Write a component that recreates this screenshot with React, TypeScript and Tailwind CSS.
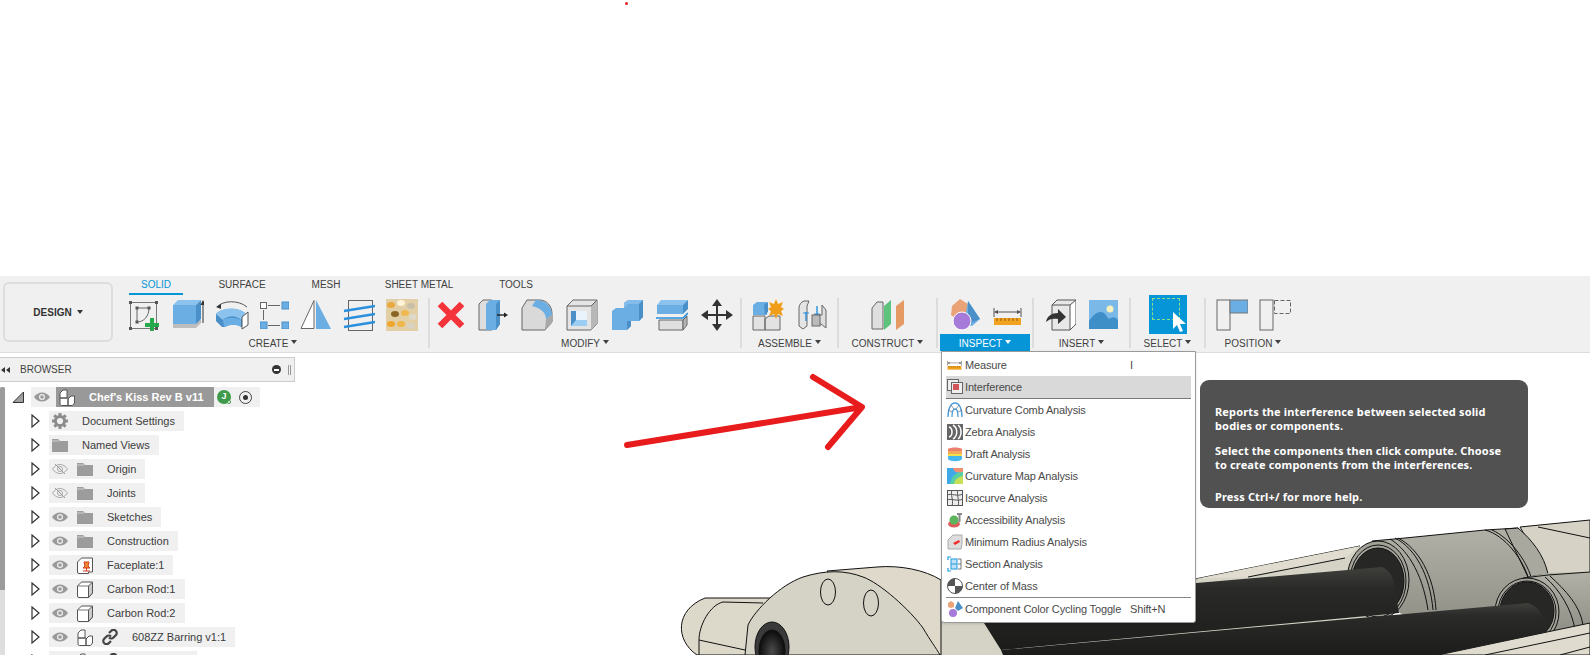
import type { ReactNode } from 'react'

const BLUE = '#6aaee4'
const DARK = '#4a8fc8'

function Ic({ w, h, children }: { w: number; h: number; children: ReactNode }) {
  return <svg width={w} height={h} viewBox={`0 0 ${w} ${h}`} className="shrink-0">{children}</svg>
}

// ---- toolbar icons
const Sketch = () => (
  <Ic w={32} h={32}>
    <rect x="1.500" y="3.500" width="26" height="26" fill="none" stroke="#777" strokeWidth="1" />
    {[[0, 2], [26, 2], [0, 28], [26, 28]].map(([x, y]) => <rect key={`${x}${y}`} x={x} y={y} width="3" height="3" fill="#555" />)}
    <path d="M8 9h12M8 9v14M20 9c0 8-5 14-12 14" fill="none" stroke="#666" />
    <rect x="6.500" y="7.500" width="3" height="3" fill="#555" /><rect x="18.500" y="7.500" width="3" height="3" fill="#555" /><rect x="6.500" y="21.500" width="3" height="3" fill="#555" />
    <path d="M21 19h4v5h5v4h-5v4h-4v-4h-5v-4h5z" fill="#27a84a" />
  </Ic>
)
const Extrude = () => (
  <Ic w={32} h={32}>
    <path d="M1 29h23l5-5v-3H1z" fill="#bdbdbd" />
    <path d="M1 6h23v19H1z" fill={BLUE} /><path d="M1 6l5-5h23l-5 5z" fill="#8cc3ee" /><path d="M24 6l5-5v19l-5 5z" fill={DARK} />
    <path d="M31 24V3" stroke="#333" /><path d="M31 1l-2.500 5h5z" fill="#333" />
  </Ic>
)
const Revolve = () => (
  <Ic w={34} h={30}>
    <path d="M2 7C8 0 24 0 32 7" fill="none" stroke="#555" /><path d="M1 7l5-3v5z" fill="#333" />
    <path d="M1 14c6-7 24-7 30 0l-4 13c-5-3-12-3-17 0H7L1 21z" fill={DARK} />
    <path d="M1 14c6-7 24-7 30 0l-5 6c-5-5-13-5-18 0z" fill="#8cc3ee" />
    <path d="M8 20c5-3 12-3 18 0v7c-5-3-11-3-17 0z" fill={BLUE} />
    <path d="M27 17l6-5v13l-6 4z" fill="#fff" stroke="#555" />
  </Ic>
)
const Pattern = () => (
  <Ic w={29} h={29}>
    <rect x="0.500" y="2.500" width="6" height="6" fill="#fff" stroke="#666" /><rect x="22" y="2" width="7" height="7" fill={BLUE} stroke={DARK} />
    <rect x="0" y="22" width="7" height="7" fill={BLUE} stroke={DARK} /><rect x="22" y="22" width="7" height="7" fill={BLUE} stroke={DARK} />
    <path d="M8 5.500h12M8 25.500h12M3.500 10v10" stroke="#666" />
  </Ic>
)
const Mirror = () => (
  <Ic w={32} h={31}>
    <path d="M14 1.500v28H1z" fill="#fff" stroke="#666" /><path d="M16 1l15 29H16z" fill={BLUE} />
  </Ic>
)
const Lines = () => (
  <Ic w={32} h={32}>
    <rect x="5.500" y="1.500" width="24" height="30" fill="#f0f0f0" stroke="#666" />
    <path d="M1 12L32 7M1 20l31-5M1 28l31-5" stroke="#2a8fdd" strokeWidth="2.400" />
  </Ic>
)
const Texture = () => (
  <Ic w={32} h={32}>
    <rect width="32" height="32" fill="#e2cfa6" />
    {[[5, 6, '#e9a93e'], [15, 4, '#fff3d8'], [25, 7, '#c8bfa9'], [9, 15, '#8a6424'], [19, 14, '#f0b84f'], [27, 18, '#ddd8c8'], [5, 25, '#f0a52e'], [15, 25, '#efb64a'], [25, 27, '#d9d3c2']].map(([x, y, c]) => (
      <ellipse key={`${x}${y}`} cx={x as number} cy={y as number} rx="4" ry="3" fill={c as string} />
    ))}
  </Ic>
)
const RedX = () => (
  <Ic w={28} h={28}>
    <path d="M3 3l22 22M25 3L3 25" stroke="#f5333a" strokeWidth="6.500" />
  </Ic>
)
const PressPull = () => (
  <Ic w={30} h={32}>
    <path d="M1 5l4-4h9v30H1z" fill="#ddd" stroke="#666" /><path d="M8 5l4-4h10v24l-4 6H8z" fill={BLUE} /><path d="M18 5l4-4v24l-4 6z" fill={DARK} />
    <path d="M19 16h9" stroke="#222" strokeWidth="1.400" /><path d="M30 16l-4-2.500v5z" fill="#222" />
  </Ic>
)
const Fillet = () => (
  <Ic w={32} h={32}>
    <path d="M1 31V9l5-8h12c8 0 13 6 13 14v8l-7 8z" fill="#d9d9d9" stroke="#666" />
    <path d="M15 1c9 0 16 6 16 15l-6 4c0-6-5-11-14-13z" fill={BLUE} />
    <path d="M25 20l6-4v8l-7 7z" fill="#a8a8a8" />
  </Ic>
)
const Shell = () => (
  <Ic w={32} h={32}>
    <path d="M1 7l6-6h24v24l-6 6H1z" fill="#e4e4e4" stroke="#666" /><path d="M25 7l6-6v24l-6 6z" fill="#b8b8b8" /><path d="M1 7h24l6-6" fill="none" stroke="#666" />
    <rect x="5" y="12" width="16" height="15" fill={DARK} /><path d="M10 12h11v9H10z" fill="#e9f3fb" /><path d="M5 27l5-6h11v6z" fill="#9ccdf2" />
  </Ic>
)
const Combine = () => (
  <Ic w={32} h={32}>
    <path d="M1 12l4-3h8V4l4-3h15v17l-4 4h-8v5l-4 4H1z" fill={BLUE} /><path d="M13 9V4l4-3h15l-4 4H17z" fill="#84bcec" /><path d="M28 5l4-4v17l-4 4zM20 22v5l-4 4v-9z" fill={DARK} />
  </Ic>
)
const Split = () => (
  <Ic w={32} h={32}>
    <path d="M1 6l4-5h27l-4 5z" fill="#8cc3ee" /><path d="M1 6h26v9H1z" fill={BLUE} /><path d="M27 6l5-5v9l-5 5z" fill={DARK} />
    <path d="M0 19h27l5-5" fill="none" stroke="#2a8fdd" strokeWidth="1.600" />
    <path d="M3 21h24v10H3z" fill="#e0e0e0" stroke="#666" /><path d="M27 21l4-4v9l-4 5z" fill="#b5b5b5" stroke="#666" />
  </Ic>
)
const Move = () => (
  <Ic w={32} h={32}>
    <path d="M16 3v26M3 16h26" stroke="#333" strokeWidth="2" />
    <path d="M16 0l-5 7h10zM16 32l-5-7h10zM0 16l7-5v10zM32 16l-7-5v10z" fill="#333" />
  </Ic>
)
const NewComp = () => (
  <Ic w={32} h={32}>
    <path d="M1 17h12v14H1zM13 20l4-3h11v14H13z" fill="#e2e2e2" stroke="#666" />
    <path d="M1 6l4-3h10v13H1z" fill={BLUE} /><path d="M12 6l4-3v10l-3 3z" fill={DARK} />
    <path d="M24 0l2 5 5-2-2 5 3 2-3 2 2 5-5-2-2 5-2-5-5 2 2-5-3-2 3-2-2-5 5 2z" fill="#f09d1a" />
  </Ic>
)
const Joint = () => (
  <Ic w={30} h={30}>
    <path d="M2 8c0-3 2-6 5-7h5l-2 5v20l-4 3-4-3z" fill="#e4e4e4" stroke="#666" />
    <path d="M17 15h8V5l4 5v18l-5-4h-7z" fill="#dedede" stroke="#666" />
    <path d="M9 12v9M20 6v11" stroke="#2a8fdd" strokeWidth="1.400" /><path d="M6 13h6M17 14h6" stroke="#2a8fdd" />
    <rect x="15" y="15" width="8" height="11" fill="#bbb" stroke="#666" />
  </Ic>
)
const Plane = () => (
  <Ic w={34} h={32}>
    <path d="M1 9l5-6h6v27H1z" fill="#dfdfdf" stroke="#666" /><path d="M13 7l7-6v24l-7 6z" fill="#5cc27c" /><path d="M25 7l8-6v24l-8 6z" fill="#e49a62" />
  </Ic>
)
const Shapes = () => (
  <Ic w={32} h={33}>
    <path d="M3 8l8-7 8 5 0 10-9 7-8-6z" fill="#e9a376" /><path d="M19 3l12 18-8 7-8-2z" fill={BLUE} /><path d="M19 3v23l12-5z" fill={DARK} />
    <circle cx="13" cy="23" r="9" fill="#a57ad8" stroke="#fff" />
  </Ic>
)
const Ruler = ({ w = 29, h = 18 }: { w?: number; h?: number }) => (
  <svg width={w} height={h} viewBox="0 0 29 18" className="shrink-0">
    <path d="M1 1v9M28 1v9M2 5h25" stroke="#555" /><path d="M1 5l4-2v4zM28 5l-4-2v4z" fill="#555" />
    <rect x="1" y="11" width="27" height="7" fill="#f2a21f" /><path d="M4 11v3M8 11v3M12 11v3M16 11v3M20 11v3M24 11v3" stroke="#8f5f0f" />
  </svg>
)
const InsertIc = () => (
  <Ic w={30} h={32}>
    <path d="M6 6l5-5h19v24l-6 6H6z" fill="#e8e8e8" stroke="#555" /><path d="M24 6l6-5v24l-6 6z" fill="#fff" stroke="#555" /><path d="M6 6h18" stroke="#555" />
    <path d="M0 23c1-6 6-9 12-9v-4l8 8-8 7v-5c-5-1-9 0-12 3z" fill="#333" />
  </Ic>
)
const Canvas = () => (
  <Ic w={29} h={29}>
    <rect width="29" height="29" fill="#7ab8e8" /><circle cx="21" cy="9" r="3.500" fill="#f6f1bf" />
    <path d="M0 29V21c5-7 8-9 12-9s5 4 8 7c3-2 6-3 9 1v9z" fill="#3e8fc8" />
  </Ic>
)
const SelectIc = () => (
  <div className="relative h-[39px] w-[38px] bg-[#0696d7]">
    <div className="m-[3px] h-[22px] w-[28px] border border-dashed border-[#8be08b]" />
    <svg width="14" height="20" viewBox="0 0 14 20" className="absolute left-[24px] top-[17px]">
      <path d="M0 0v17l4-4 3 7 3-1-3-7h6z" fill="#fff" />
    </svg>
  </div>
)
const PosA = () => (
  <Ic w={32} h={32}>
    <rect x="1" y="1" width="13" height="30" fill="#f0f0f0" stroke="#666" /><rect x="14" y="1" width="18" height="13" fill={BLUE} stroke="#777" />
  </Ic>
)
const PosB = () => (
  <Ic w={32} h={32}>
    <rect x="1" y="1" width="13" height="30" fill="#f0f0f0" stroke="#666" /><rect x="15.500" y="1.500" width="16" height="13" fill="none" stroke="#666" strokeDasharray="4 2" />
  </Ic>
)

function Group({ w, label, active, children }: { w: number; label: string; active?: boolean; children: ReactNode }) {
  return (
    <div className="flex shrink-0 flex-col items-stretch" style={{ width: w }}>
      <div className="flex h-[39px] items-center justify-center">{children}</div>
      <div className={`mx-[2px] flex h-[17px] items-center justify-center gap-[3px] pt-[1px] text-[10px] ${active ? 'bg-[#0696d7] text-white' : 'text-[#404040]'}`}>
        {label}
        <span className="mb-[2px] h-0 w-0 border-x-[3px] border-t-[4px] border-x-transparent border-t-current" />
      </div>
    </div>
  )
}
const Divider = () => <div className="mt-[3px] h-[50px] w-[2px] shrink-0 bg-[#dcdcdc]" />

function Toolbar() {
  const tabs: [string, number, boolean?][] = [['SOLID', 54, true], ['SURFACE', 118], ['MESH', 50], ['SHEET METAL', 136], ['TOOLS', 58]]
  return (
    <div className="flex h-[77px] border-b border-[#dddddd] bg-[#f0f0f0]">
      <div className="ml-[3px] mt-[6px] flex h-[60px] w-[110px] shrink-0 items-center justify-center gap-[5px] rounded-[6px] border-2 border-[#dddddd] text-[10px] font-bold text-[#333]">
        DESIGN
        <span className="h-0 w-0 border-x-[3px] border-t-[4px] border-x-transparent border-t-[#333]" />
      </div>
      <div className="ml-[5px] flex flex-col">
        <div className="ml-[11px] flex h-[19px]">
          {tabs.map(([t, w, on]) => (
            <div key={t} style={{ width: w }} className={`pt-[1px] text-center text-[10px] ${on ? 'border-b-2 border-[#0696d7] text-[#0696d7]' : 'text-[#404040]'}`}>{t}</div>
          ))}
        </div>
        <div className="flex">
          <Group w={310} label="CREATE">
            <div className="flex items-center gap-[11px]"><Sketch /><Extrude /><Revolve /><Pattern /><Mirror /><Lines /><Texture /></div>
          </Group>
          <Divider />
          <Group w={310} label="MODIFY">
            <div className="flex items-center gap-[13px]"><RedX /><PressPull /><Fillet /><Shell /><Combine /><Split /><Move /></div>
          </Group>
          <Divider />
          <Group w={95} label="ASSEMBLE">
            <div className="flex items-center gap-[13px]"><NewComp /><Joint /></div>
          </Group>
          <Divider />
          <Group w={97} label="CONSTRUCT"><Plane /></Group>
          <Divider />
          <Group w={94} label="INSPECT" active>
            <div className="flex items-center gap-[12px]"><Shapes /><div className="mt-[3px]"><Ruler /></div></div>
          </Group>
          <Divider />
          <Group w={95} label="INSERT">
            <div className="flex items-center gap-[13px]"><InsertIc /><Canvas /></div>
          </Group>
          <Divider />
          <Group w={73} label="SELECT"><SelectIc /></Group>
          <Divider />
          <Group w={94} label="POSITION">
            <div className="flex items-center gap-[11px]"><PosA /><PosB /></div>
          </Group>
        </div>
      </div>
    </div>
  )
}

// ---- browser tree
const Eye = () => (
  <svg width="16" height="10" viewBox="0 0 16 10" className="shrink-0">
    <path d="M0 5c4-6 12-6 16 0-4 6-12 6-16 0z" fill="#9a9a9a" /><circle cx="8" cy="5" r="3" fill="#f0f0f0" /><circle cx="8" cy="5" r="1.800" fill="#9a9a9a" />
  </svg>
)
const EyeOff = () => (
  <svg width="16" height="12" viewBox="0 0 16 12" className="shrink-0">
    <path d="M0.500 6c4-6 11-6 15 0-4 6-11 6-15 0z" fill="none" stroke="#aaa" /><circle cx="8" cy="6" r="2.500" fill="none" stroke="#aaa" /><path d="M3 1l10 10" stroke="#999" />
  </svg>
)
const Folder = () => (
  <svg width="16" height="13" viewBox="0 0 16 13" className="shrink-0">
    <path d="M0 0h6l2 2h8v11H0z" fill="#9c9c9c" /><path d="M0 2h7" stroke="#d0d0d0" />
  </svg>
)
const Gear = () => (
  <svg width="16" height="16" viewBox="0 0 16 16" className="shrink-0">
    <circle cx="8" cy="8" r="4.600" fill="none" stroke="#8c8c8c" strokeWidth="3" />
    <path d="M8 0v16M0 8h16M2.300 2.300l11.400 11.400M13.700 2.300L2.300 13.700" stroke="#8c8c8c" strokeWidth="3" strokeDasharray="3 10" />
  </svg>
)
const Box = () => (
  <svg width="16" height="17" viewBox="0 0 16 17" className="shrink-0">
    <path d="M0.500 5l4-4h11v11l-4 4.500H2a1.500 1.500 0 0 1-1.500-1.500z" fill="#fff" stroke="#555" /><path d="M11.500 5l4-4v11l-4 4.500z" fill="#ccc" stroke="#555" /><path d="M0.500 5h11" stroke="#777" />
  </svg>
)
const Pinned = () => (
  <svg width="16" height="17" viewBox="0 0 16 17" className="shrink-0">
    <path d="M0.500 5l4-4h11v14h-4v1.500H2a1.500 1.500 0 0 1-1.500-1.500z" fill="#fff" stroke="#555" />
    <path d="M7 5h5l-1 4 2 2H6l2-2zM9.500 11v3" fill="#f08a2c" stroke="#d23a1f" />
    <path d="M6 14h7" stroke="#d23a1f" />
  </svg>
)
const Assembly = () => (
  <svg width="16" height="17" viewBox="0 0 16 17" className="shrink-0">
    <path d="M1 4l3-3h4v8H1zM1 9h8v7.500H2.500A1.500 1.500 0 0 1 1 15zM9 10l3-3h3.500v7l-2 2.500H9z" fill="#fff" stroke="#555" />
  </svg>
)
const LinkIc = () => (
  <svg width="16" height="16" viewBox="0 0 16 16" className="shrink-0" fill="none" stroke="#444" strokeWidth="2.200">
    <path d="M7 4l2-2a3 3 0 0 1 5 4l-2.500 2.500a3 3 0 0 1-4.500 0" /><path d="M9 12l-2 2a3 3 0 0 1-5-4l2.500-2.500a3 3 0 0 1 4.500 0" />
  </svg>
)
const Caret = () => (
  <svg width="9" height="14" viewBox="0 0 9 14" className="shrink-0"><path d="M1 1l7 6-7 6z" fill="#fff" stroke="#333" strokeWidth="1.200" /></svg>
)

type Row = { label: string; eye?: 'on' | 'off'; icon: ReactNode; link?: boolean; w?: number }
const rows: Row[] = [
  { label: 'Document Settings', icon: <Gear /> },
  { label: 'Named Views', icon: <Folder /> },
  { label: 'Origin', eye: 'off', icon: <Folder /> },
  { label: 'Joints', eye: 'off', icon: <Folder /> },
  { label: 'Sketches', eye: 'on', icon: <Folder /> },
  { label: 'Construction', eye: 'on', icon: <Folder /> },
  { label: 'Faceplate:1', eye: 'on', icon: <Pinned /> },
  { label: 'Carbon Rod:1', eye: 'on', icon: <Box /> },
  { label: 'Carbon Rod:2', eye: 'on', icon: <Box /> },
  { label: '608ZZ Barring v1:1', eye: 'on', icon: <Assembly />, link: true },
  { label: '', eye: 'on', icon: <Assembly />, link: true, w: 148 }, // cut by the window, only the icons show
]

function TreeRow({ label, eye, icon, link, w }: Row) {
  return (
    <div className="flex h-[20px] items-center pl-[26px]">
      <div className="mr-[9px] flex w-[9px]"><Caret /></div>
      <div style={{ width: w }} className="flex h-[20px] items-center bg-[#f0f0f0] pl-[3px] pr-[9px] text-[11px] text-[#3c3c3c]">
        {eye && <span className="flex w-[25px]">{eye === 'on' ? <Eye /> : <EyeOff />}</span>}
        <span className="flex w-[30px]">{icon}</span>
        {link && <span className="-ml-[5px] flex w-[30px]"><LinkIc /></span>}
        {label}
      </div>
    </div>
  )
}

function Browser() {
  return (
    <div className="relative z-10 w-[295px] shrink-0 pt-[4px]">
      <div className="flex h-[25px] items-center border border-l-0 border-[#cccccc] bg-[#f0f0f0] pl-[1px] text-[10px] text-[#444]">
        <span className="flex w-[19px]">
          <svg width="9" height="6" viewBox="0 0 9 6"><path d="M4 0v6L0 3zM9 0v6L5 3z" fill="#333" /></svg>
        </span>
        BROWSER
        <span className="ml-auto mr-[3px] flex items-center gap-[7px]">
          <span className="flex h-[9px] w-[9px] items-center justify-center rounded-full bg-[#333]"><span className="h-[2px] w-[5px] bg-white" /></span>
          <span className="h-[10px] w-[3px] border-x border-[#999]" />
        </span>
      </div>
      <div className="mt-[5px] flex">
        <div className="h-[300px] w-[5px] shrink-0 bg-[#dedede]"><div className="h-[203px] rounded-t-[2px] bg-[#9b9b9b]" /></div>
        <div className="flex flex-col gap-[4px]">
          <div className="flex h-[20px] items-center pl-[7px]">
            <svg width="12" height="12" viewBox="0 0 12 12" className="mr-[7px] shrink-0"><path d="M1 11.500L11.500 1v10.500z" fill="#a0a0a0" stroke="#333" /></svg>
            <div className="flex h-[20px] w-[229px] items-center bg-[#f0f0f0] pl-[3px]">
              <span className="flex w-[22px]"><Eye /></span>
              <div className="flex h-[20px] w-[158px] items-center bg-[#999999] pl-[3px] text-[11px] font-bold text-white">
                <Assembly /><span className="ml-[14px]">Chef's Kiss Rev B v11</span>
              </div>
              <span className="relative ml-[3px] flex h-[14px] w-[14px] items-center justify-center rounded-full bg-[#3f9b4b] text-[9px] font-bold text-white">
                J<span className="absolute bottom-0 right-0 h-[4px] w-[4px] rounded-full border border-[#3f9b4b] bg-white" />
              </span>
              <span className="ml-[8px] flex h-[13px] w-[13px] items-center justify-center rounded-full border border-[#444]"><span className="h-[5px] w-[5px] rounded-full bg-[#333]" /></span>
            </div>
          </div>
          {rows.map(r => <TreeRow key={r.label || 'cut'} {...r} />)}
        </div>
      </div>
    </div>
  )
}

// ---- dropdown
const Sz = ({ children }: { children: ReactNode }) => <svg width="16" height="16" viewBox="0 0 16 16">{children}</svg>
const menuIcons: Record<string, ReactNode> = {
  Measure: <Ruler w={15} h={10} />,
  Interference: <Sz><rect x="0.500" y="0.500" width="11" height="11" fill="#eee" stroke="#666" /><rect x="4.500" y="3.500" width="11" height="11" fill="#eee" stroke="#666" /><rect x="6" y="5" width="6" height="6" fill="#d2555a" /></Sz>,
  'Curvature Comb Analysis': <Sz><path d="M1 15C1 6 4 1 8 1s7 5 7 14M5 15c0-5 1-8 3-8s3 3 3 8" fill="none" stroke="#4a9ad8" strokeWidth="1.300" /><path d="M1 8l4 2M4 3l3 4M12 3L9 7M15 8l-4 2" stroke="#666" strokeWidth=".7" /></Sz>,
  'Zebra Analysis': <Sz><rect width="16" height="16" fill="#666" /><path d="M2 3c4 1 4 9 0 10M6 1c5 3 5 11 0 14M11 1c4 3 4 11 0 14" fill="none" stroke="#fff" strokeWidth="1.500" /></Sz>,
  'Draft Analysis': <Sz><path d="M1 3c2-2 12-2 14 0v2H1z" fill="#ef7f6d" /><rect x="1" y="5" width="14" height="3" fill="#f5a95a" /><rect x="1" y="8" width="14" height="2" fill="#f2e14a" /><path d="M1 10h14v3c-2 3-12 3-14 0z" fill="#45b7ee" /></Sz>,
  'Curvature Map Analysis': <Sz><rect width="16" height="16" fill="#3fa9e8" /><path d="M3 16C4 9 9 4 16 3v13z" fill="#58d0a6" /><path d="M7 16c1-5 4-7 9-8v8z" fill="#c8df58" /><path d="M6 0h10v4C11 4 8 6 6 0z" fill="#ef8f74" /></Sz>,
  'Isocurve Analysis': <Sz><rect x="0.500" y="0.500" width="15" height="15" fill="#eee" stroke="#555" /><path d="M0 5c5-2 10 2 16-1M0 10c5-2 10 2 16-1M5 0c-2 5 2 10 0 16M11 0c-2 5 2 10 0 16" fill="none" stroke="#555" /></Sz>,
  'Accessibility Analysis': <Sz><ellipse cx="7" cy="12" rx="6" ry="3.500" fill="#df5c5c" /><circle cx="7" cy="8" r="4.500" fill="#5cb45c" /><path d="M10 1h5v2h-1.500v7h-2V3H10z" fill="#888" /></Sz>,
  'Minimum Radius Analysis': <Sz><path d="M1 6l5-5h9v9l-1 5H1z" fill="#ddd" stroke="#aaa" /><path d="M6 9l6-3 1 2-5 3z" fill="#ef2b2b" /></Sz>,
  'Section Analysis': <Sz><path d="M4 1H1v3M1 12v3h3" fill="none" stroke="#1f9be0" strokeWidth="1.200" /><rect x="4" y="3" width="6" height="10" fill="#bfe0f6" stroke="#1f9be0" /><path d="M4 8h6" stroke="#1f9be0" /><path d="M11 3h3v10h-3M11 8h3" fill="none" stroke="#777" /></Sz>,
  'Center of Mass': <Sz><circle cx="8" cy="8" r="7.500" fill="#fff" stroke="#555" /><path d="M8 8V.5A7.500 7.500 0 0 0 .5 8zM8 8v7.500A7.500 7.500 0 0 0 15.500 8z" fill="#555" /></Sz>,
  'Component Color Cycling Toggle': <Sz><path d="M1 2l3-2 3 2v4L4 7 1 6z" fill="#e9a376" /><path d="M11 0l5 7-5 3-3-3z" fill={DARK} /><circle cx="6" cy="12" r="4" fill="#a57ad8" /></Sz>,
}
const items: [string, string?][] = [
  ['Measure', 'I'], ['Interference'], ['Curvature Comb Analysis'], ['Zebra Analysis'], ['Draft Analysis'], ['Curvature Map Analysis'],
  ['Isocurve Analysis'], ['Accessibility Analysis'], ['Minimum Radius Analysis'], ['Section Analysis'], ['Center of Mass'],
]

function MenuRow({ label, shortcut }: { label: string; shortcut?: string }) {
  const on = label === 'Interference'
  return (
    <div className={`flex items-center pl-[1px] text-[11px] tracking-[-0.15px] text-[#4a4a4a] ${on ? 'h-[23px] border-b border-[#777] bg-[#d9d9d9]' : 'h-[22px]'}`}>
      <span className="flex w-[18px] items-center">{menuIcons[label]}</span>
      <span className="w-[165px] shrink-0 whitespace-nowrap">{label}</span>
      {shortcut && <span>{shortcut}</span>}
    </div>
  )
}

function InspectMenu() {
  return (
    <div className="absolute left-[941px] top-[351px] z-20 h-[272px] w-[255px] rounded-b-[3px] border border-[#999] bg-white px-[4px] pt-[2px] shadow-sm">
      {items.map(([l, s]) => <MenuRow key={l} label={l} shortcut={s} />)}
      <div className="h-px bg-[#888]" />
      <MenuRow label="Component Color Cycling Toggle" shortcut="Shift+N" />
    </div>
  )
}

function Tip() {
  return (
    <div className="absolute left-[1200px] top-[380px] z-20 flex h-[128px] w-[328px] flex-col rounded-[9px] bg-[#515151] pl-[15px] pt-[25px] font-['Noto_Sans',sans-serif] text-[11px] font-bold leading-[14px] tracking-[0.15px] text-white">
      <p>Reports the interference between selected solid<br />bodies or components.</p>
      <p className="mt-[11px]">Select the components then click compute. Choose<br />to create components from the interferences.</p>
      <p className="mt-[18px]">Press Ctrl+/ for more help.</p>
    </div>
  )
}

// ---- the model in the viewport and the hand drawn arrow, page coordinates
function Scene() {
  return (
    <svg width="1590" height="655" viewBox="0 0 1590 655" className="absolute left-0 top-0 z-0">
      <defs>
        <linearGradient id="rod" x1="0" y1="0" x2="0" y2="1"><stop offset="0" stopColor="#3f3f3c" /><stop offset="0.25" stopColor="#2a2a28" /><stop offset="1" stopColor="#1c1c1b" /></linearGradient>
        <linearGradient id="sleeve" x1="0" y1="0" x2="0" y2="1"><stop offset="0" stopColor="#b2b1a7" /><stop offset="1" stopColor="#908f86" /></linearGradient>
        <radialGradient id="bore"><stop offset="0" stopColor="#4a4a4a" /><stop offset="1" stopColor="#0c0c0c" /></radialGradient>
      </defs>
      <g stroke="#111" strokeWidth="1">
        {/* base the sleeves sit on */}
        <path d="M930 600L1195 579 1360 546 1380 640 1010 655H930z" fill="#d5d3c6" stroke="none" />
        <path d="M1195 579L1360 546" fill="none" />
        <path d="M1195 579L1360 546 1345 558 1248 577z" fill="#e0dccf" stroke="none" />
        <path d="M1248 577L1345 558" fill="none" />
        <path d="M1520 527L1590 520V580L1548 575z" fill="#d6d3c6" />
        <path d="M1538 527L1590 538" fill="none" />
        {/* sleeves */}
        <path d="M1372 541L1405 538 1485 530 1518 528 1528 577 1500 610 1420 625 1395 610z" fill="url(#sleeve)" stroke="none" />
        <path d="M1372 541L1405 538 1485 530 1518 528" fill="none" />
        <path d="M1505 529L1518 528C1532 540 1544 555 1548 574L1528 577z" fill="#a9a89e" />
        <path d="M1485 530C1505 535 1523 560 1528 577M1492 530C1510 538 1526 560 1531 577" fill="none" />
        <path d="M1395 538C1415 548 1430 575 1433 610M1398 538C1418 548 1434 575 1436 610M1390 539C1405 548 1422 570 1428 610" fill="none" />
        <path d="M1523 578L1548 573 1590 572V625L1557 632 1540 625z" fill="url(#sleeve)" stroke="none" />
        <path d="M1523 578L1548 575 1590 572" fill="none" />
        <path d="M1550 576C1565 590 1580 605 1583 625M1545 577C1560 590 1572 610 1575 630" fill="none" />
        {/* bearings */}
        <ellipse cx="1378" cy="580" rx="31" ry="39" fill="#a3a299" />
        <ellipse cx="1378" cy="581" rx="28" ry="36" fill="none" />
        <ellipse cx="1378" cy="581" rx="26" ry="33" fill="#272725" />
        <ellipse cx="1527" cy="612" rx="32" ry="34" fill="#a3a299" />
        <ellipse cx="1527" cy="612" rx="29" ry="31" fill="none" />
        <ellipse cx="1527" cy="611" rx="27" ry="29" fill="#272725" />
        {/* front base */}
        <path d="M1438 655L1547 632 1590 623V655z" fill="#dfdbce" />
        <path d="M1485 655L1590 633M1560 655L1590 647" fill="none" />
        {/* rods */}
        <path d="M941 605L1382 567C1389 570 1392 575 1394 582L1399 613 1001 650 984 623z" fill="url(#rod)" stroke="none" />
        <path d="M1001 650L1528 603C1536 606 1541 611 1543 618L1547 632 1438 655H1003z" fill="url(#rod)" stroke="none" />
        {/* left boss */}
        <path d="M705 598L770 598 748 655H697C675 640 675 610 705 598z" fill="#dcd8ca" />
        <path d="M699 655V640C699 625 710 605 723 602L763 603M699 640L745 650" fill="none" />
        {/* face plate */}
        <path d="M827 571L877 567C900 565 925 570 941 580V655H900z" fill="#ded9cb" />
        <path d="M745 655L748 625C755 610 780 585 803 577 825 570 845 570 863 577 880 583 910 610 923 628 930 640 936 648 940 655z" fill="#d5d3c5" />
        <ellipse cx="828" cy="592" rx="7.500" ry="13" fill="#d5d3c5" />
        <ellipse cx="871" cy="603" rx="7.500" ry="13" fill="#d5d3c5" />
        <ellipse cx="772" cy="647" rx="17" ry="25" fill="#3a3a3a" />
        <ellipse cx="772" cy="651" rx="13" ry="21" fill="url(#bore)" />
      </g>
      <path d="M627 445L862 407M813 377L862 407 828 447" fill="none" stroke="#e81c1c" strokeWidth="6" strokeLinecap="round" strokeLinejoin="round" />
    </svg>
  )
}

export default function App() {
  return (
    <div className="relative h-[655px] w-[1590px] overflow-hidden bg-white font-['Liberation_Sans',Arial,sans-serif]">
      <Scene />
      <span className="absolute left-[625px] top-[2px] h-[3px] w-[3px] rounded-full bg-[#e02020]" />
      <div className="relative z-10 pt-[276px]"><Toolbar /></div>
      <Browser />
      <InspectMenu />
      <Tip />
    </div>
  )
}
